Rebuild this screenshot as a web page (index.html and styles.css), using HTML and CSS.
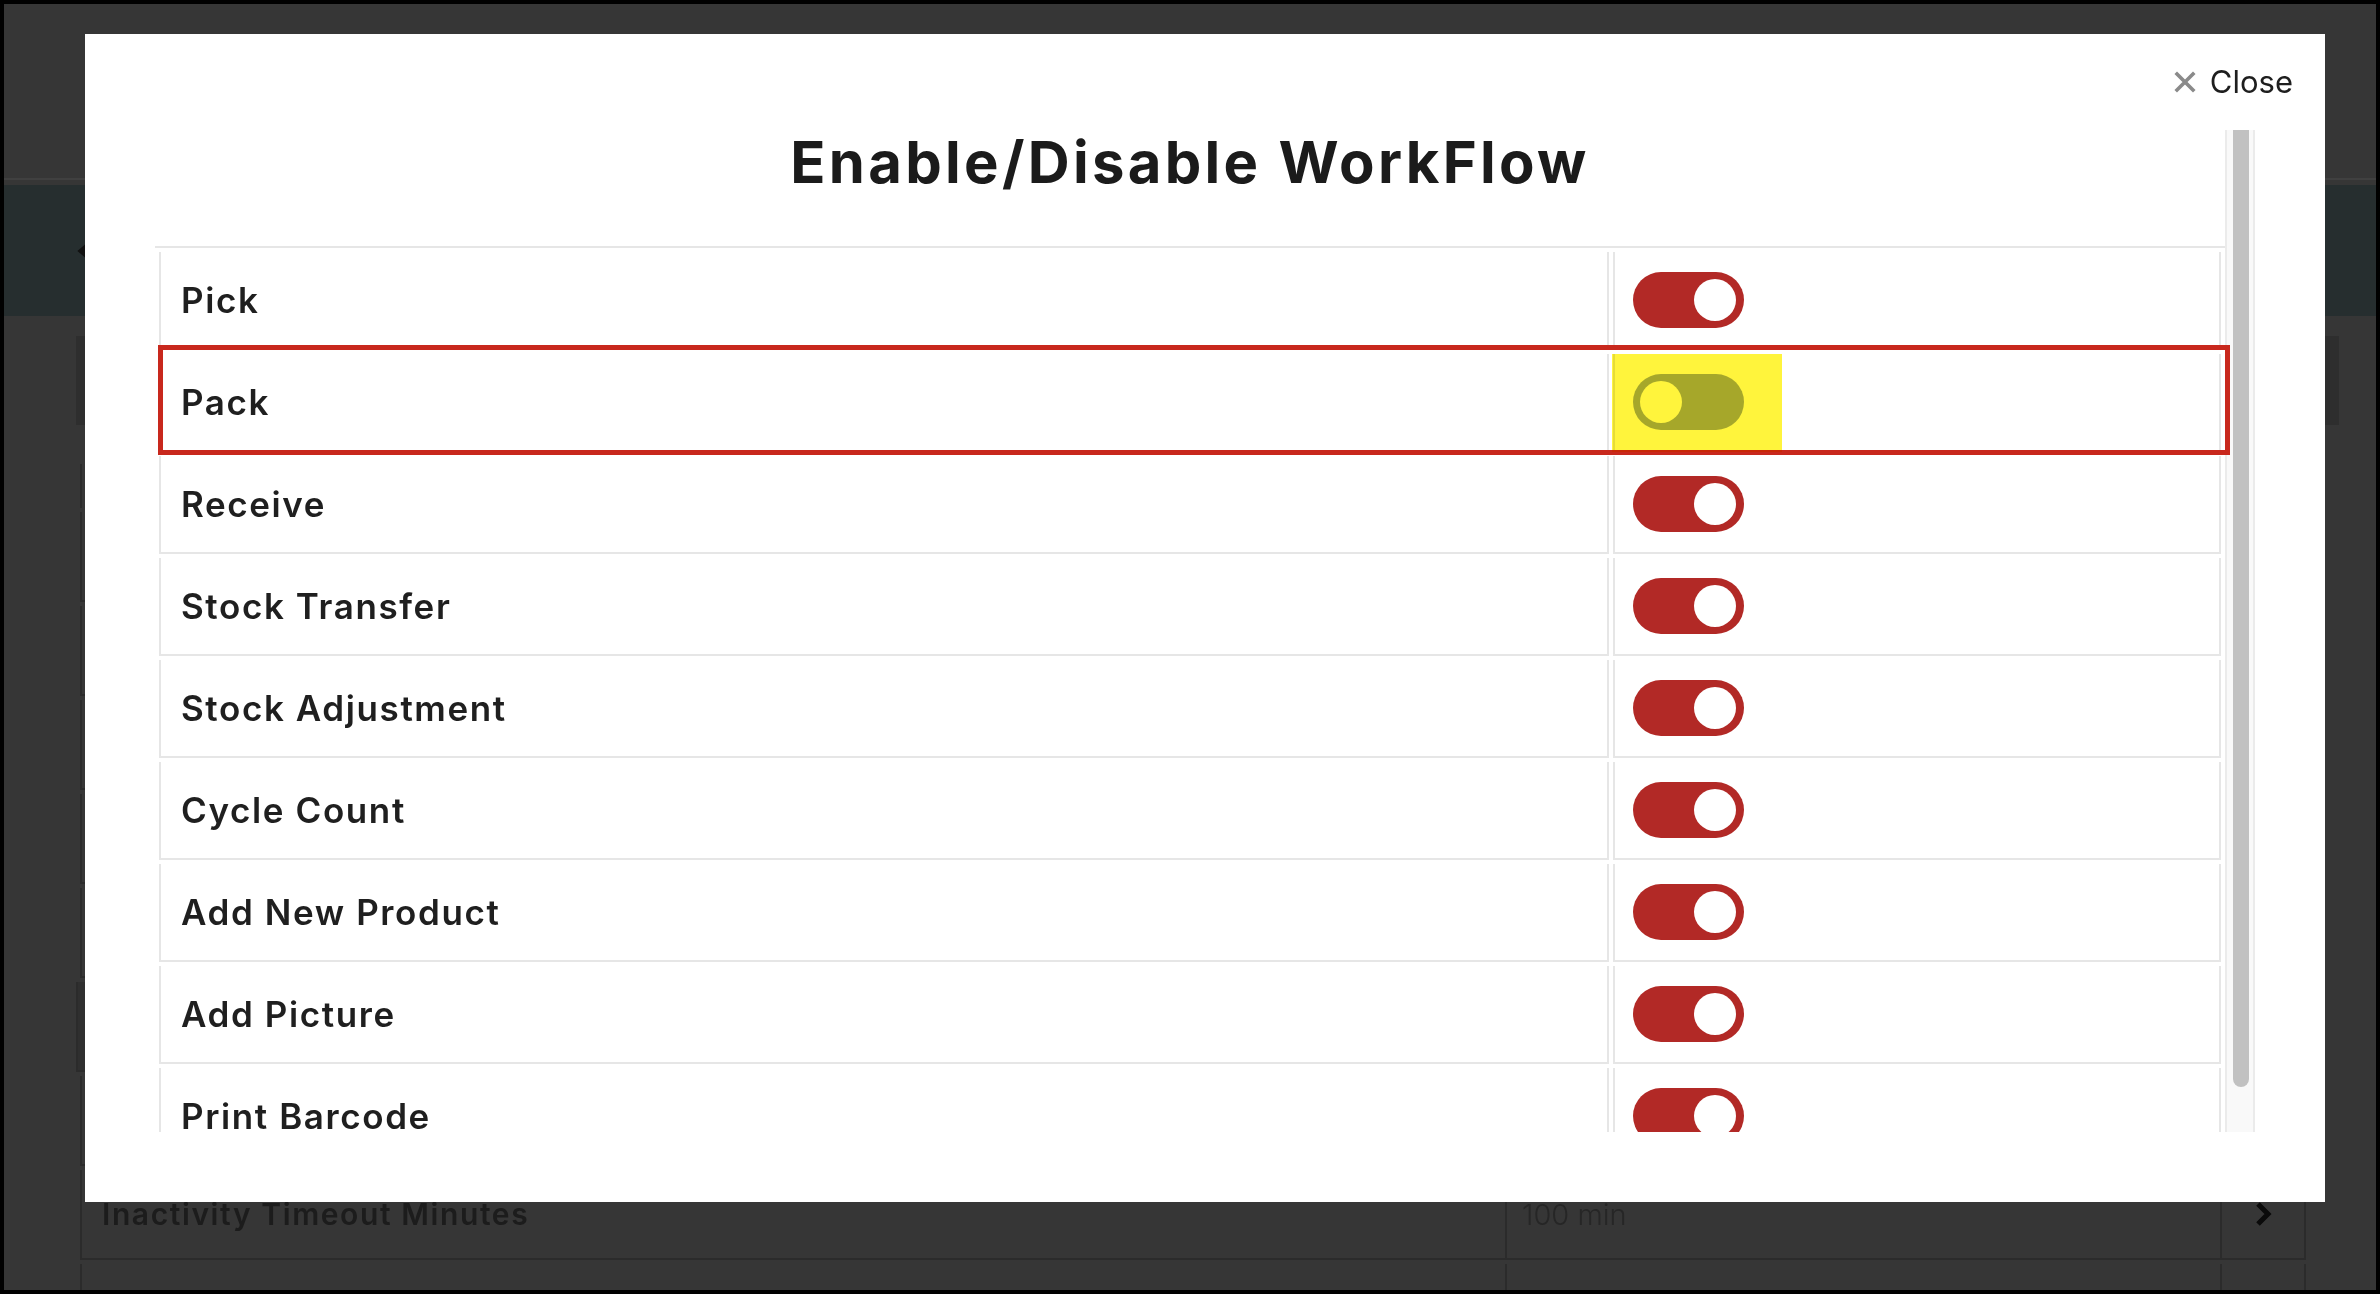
FILE: index.html
```html
<!DOCTYPE html>
<html lang="en">
<head>
<meta charset="utf-8">
<title>Enable/Disable WorkFlow</title>
<link rel="stylesheet" href="styles.css">
</head>
<body>
<div class="screen">
  <header class="app-header"></header>
  <div class="subbar">
    <svg class="back" viewBox="0 0 24 30" aria-hidden="true"><polyline points="20,3 6,15 20,27" fill="none" stroke="#111" stroke-width="6"/></svg>
  </div>
  <main class="page">
    <div class="search"></div>
    <div class="list">
      <div class="list-head"></div>
      <div class="list-row"><div class="c-label"></div><div class="c-value"></div><div class="c-go"></div></div>
      <div class="list-row"><div class="c-label"></div><div class="c-value"></div><div class="c-go"></div></div>
      <div class="list-row"><div class="c-label"></div><div class="c-value"></div><div class="c-go"></div></div>
      <div class="list-row"><div class="c-label"></div><div class="c-value"></div><div class="c-go"></div></div>
      <div class="list-row"><div class="c-label"></div><div class="c-value"></div><div class="c-go"></div></div>
      <div class="list-row section"><div class="c-label"></div><div class="c-value"></div><div class="c-go"></div></div>
      <div class="list-row"><div class="c-label"></div><div class="c-value"></div><div class="c-go"></div></div>
      <div class="list-row">
        <div class="c-label">Inactivity Timeout Minutes</div>
        <div class="c-value">100 min</div>
        <div class="c-go"><svg viewBox="0 0 20 26" aria-hidden="true"><polyline points="5,3 15,13 5,23" fill="none" stroke="#0a0a0a" stroke-width="5"/></svg></div>
      </div>
      <div class="list-row">
        <div class="c-label"></div>
        <div class="c-value"></div>
        <div class="c-go"><svg viewBox="0 0 20 26" aria-hidden="true"><polyline points="5,3 15,13 5,23" fill="none" stroke="#0a0a0a" stroke-width="5"/></svg></div>
      </div>
    </div>
  </main>

  <div class="modal" role="dialog" aria-label="Enable/Disable WorkFlow">
    <button class="close" type="button">
      <svg viewBox="0 0 24 24" aria-hidden="true"><path d="M4 4 L20 20 M20 4 L4 20" stroke="#8a8a8a" stroke-width="3.6" stroke-linecap="square"/></svg>
      <span>Close</span>
    </button>
    <div class="modal-body">
      <div class="modal-scroll">
        <h2 class="title">Enable/Disable WorkFlow</h2>
        <table class="wf">
          <tbody>
            <tr><td class="name">Pick</td><td class="ctl"><label class="switch"><input type="checkbox" checked><span class="slider"></span></label></td></tr>
            <tr><td class="name">Pack</td><td class="ctl"><label class="switch"><input type="checkbox"><span class="slider"></span></label></td></tr>
            <tr><td class="name">Receive</td><td class="ctl"><label class="switch"><input type="checkbox" checked><span class="slider"></span></label></td></tr>
            <tr><td class="name">Stock Transfer</td><td class="ctl"><label class="switch"><input type="checkbox" checked><span class="slider"></span></label></td></tr>
            <tr><td class="name">Stock Adjustment</td><td class="ctl"><label class="switch"><input type="checkbox" checked><span class="slider"></span></label></td></tr>
            <tr><td class="name">Cycle Count</td><td class="ctl"><label class="switch"><input type="checkbox" checked><span class="slider"></span></label></td></tr>
            <tr><td class="name">Add New Product</td><td class="ctl"><label class="switch"><input type="checkbox" checked><span class="slider"></span></label></td></tr>
            <tr><td class="name">Add Picture</td><td class="ctl"><label class="switch"><input type="checkbox" checked><span class="slider"></span></label></td></tr>
            <tr><td class="name">Print Barcode</td><td class="ctl"><label class="switch"><input type="checkbox" checked><span class="slider"></span></label></td></tr>
          </tbody>
        </table>
      </div>
      <div class="scrollbar" aria-hidden="true"><div class="thumb"></div></div>
    </div>
    <div class="mark-row" aria-hidden="true"></div>
    <div class="mark-hl" aria-hidden="true"></div>
  </div>
</div>
</body>
</html>
```
FILE: styles.css
```css
html {
  background: #000;
}

body {
  margin: 0;
  padding: 4px;
  font-family: Inter, "Liberation Sans", sans-serif;
}

.screen {
  position: relative;
  width: 2372px;
  height: 1286px;
  background: #363636;
  overflow: hidden;
}

/* ---------- dimmed page behind the dialog ---------- */
.app-header {
  height: 174px;
  border-bottom: 2px solid #404040;
}

.subbar {
  margin-top: 5px;
  height: 131px;
  background: #262e2f;
  display: flex;
  align-items: center;
  padding-left: 72px;
}

.back {
  width: 24px;
  height: 30px;
}

.page {
  padding: 20px 37px 0 72px;
}

.search {
  height: 89px;
  background: #2e2e2e;
}

.list {
  margin: 39px 33px 0 4px;
}

.list-head {
  height: 44px;
  box-sizing: border-box;
  border-left: 2px solid #2b2b2b;
  border-right: 2px solid #2b2b2b;
}

.list-row {
  display: grid;
  grid-template-columns: 1425px 715px 1fr;
  height: 90px;
  margin-top: 4px;
  box-sizing: border-box;
  border-bottom: 2px solid #2b2b2b;
  border-right: 2px solid #2b2b2b;
}

.list-row.section {
  background: #2f2f2f;
  margin-left: -4px;
}

.c-label,
.c-value,
.c-go {
  border-left: 2px solid #2b2b2b;
  display: flex;
  align-items: center;
}

.c-label {
  padding-left: 20px;
  font-size: 30px;
  font-weight: 600;
  letter-spacing: 1.6px;
  color: #1c1c1c;
}

.c-value {
  padding-left: 15px;
  font-size: 29px;
  font-weight: 300;
  color: #262626;
}

.c-go {
  justify-content: center;
}

.c-go svg {
  width: 20px;
  height: 26px;
}

/* ---------- dialog ---------- */
.modal {
  position: absolute;
  left: 81px;
  top: 30px;
  width: 2240px;
  height: 1168px;
  box-sizing: border-box;
  padding: 92px 70px 70px;
  background: #fff;
}

.close {
  position: absolute;
  top: 28px;
  right: 32px;
  display: flex;
  align-items: center;
  gap: 13px;
  padding: 0;
  border: 0;
  background: none;
  font: 400 31px/40px Inter, "Liberation Sans", sans-serif;
  color: #1e1e1e;
  cursor: pointer;
}

.close svg {
  width: 24px;
  height: 24px;
}

.modal-body {
  display: flex;
  height: 1006px;
}

.modal-scroll {
  flex: 1;
  min-width: 0;
  overflow: hidden;
}

.scrollbar {
  width: 30px;
  height: 1002px;
  margin-top: 4px;
  box-sizing: border-box;
  background: #f9f9f9;
  border-left: 2px solid #ebebeb;
  border-right: 2px solid #ebebeb;
}

.thumb {
  width: 16px;
  height: 957px;
  margin-left: 6px;
  background: #c1c1c1;
  border-radius: 0 0 8px 8px;
}

.title {
  margin: 0 0 48px;
  text-align: center;
  font: 700 58px/72px Inter, "Liberation Sans", sans-serif;
  letter-spacing: 3.3px;
  color: #1b1b1b;
}

.wf {
  width: 100%;
  table-layout: fixed;
  border-collapse: separate;
  border-spacing: 4px;
  border-top: 2px solid #e6e6e6;
}

.wf td {
  height: 98px;
  box-sizing: border-box;
  border: 2px solid #e6e6e6;
  border-top: 0;
  padding: 0 20px;
  vertical-align: middle;
}

.wf .name {
  width: 1450px;
  font-size: 35px;
  font-weight: 600;
  letter-spacing: 1.6px;
  color: #1f1f1f;
}

.wf .ctl {
  padding-left: 18px;
  line-height: 0;
}

.switch {
  position: relative;
  display: inline-block;
  width: 111px;
  height: 56px;
  vertical-align: middle;
}

.switch input {
  position: absolute;
  width: 0;
  height: 0;
  margin: 0;
  opacity: 0;
}

.slider {
  position: absolute;
  inset: 0;
  border-radius: 28px;
  background: #a6afb3;
}

.slider::before {
  content: "";
  position: absolute;
  left: 7px;
  top: 7px;
  width: 42px;
  height: 42px;
  border-radius: 50%;
  background: #fff;
}

.switch input:checked + .slider {
  background: #b22926;
}

.switch input:checked + .slider::before {
  left: 61px;
}

/* ---------- annotation marks drawn over the dialog ---------- */
.mark-row {
  position: absolute;
  left: 73px;
  top: 311px;
  width: 2072px;
  height: 110px;
  box-sizing: border-box;
  border: 5px solid #c8281d;
  pointer-events: none;
}

.mark-hl {
  position: absolute;
  left: 1527px;
  top: 320px;
  width: 170px;
  height: 98px;
  background: #fff43c;
  mix-blend-mode: multiply;
  pointer-events: none;
}
```
